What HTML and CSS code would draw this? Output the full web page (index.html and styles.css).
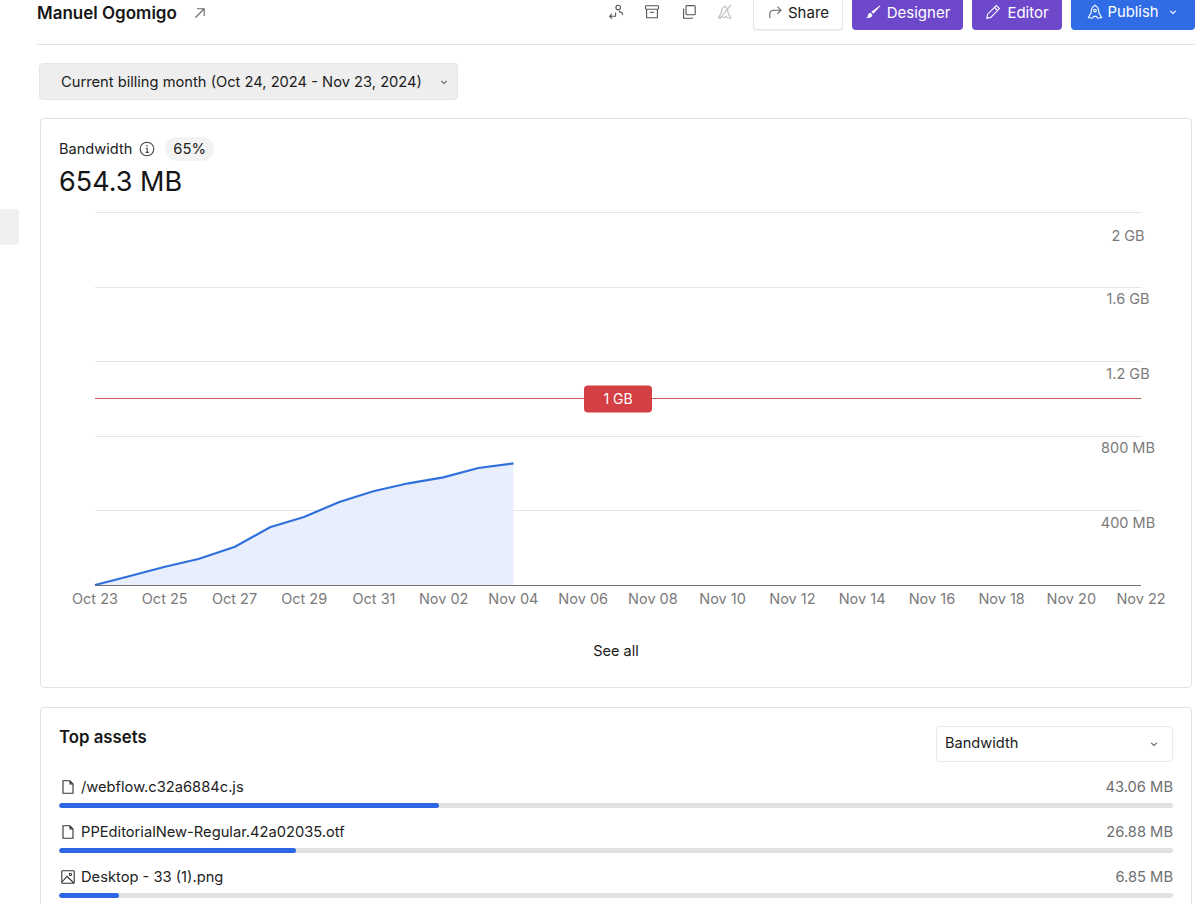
FILE: index.html
```html
<!DOCTYPE html>
<html lang="en">
<head>
<meta charset="utf-8">
<title>Usage</title>
<link rel="stylesheet" href="styles.css">
</head>
<body>
<div class="app">
  <aside class="rail"><div class="rail-tab"></div></aside>
  <main class="main">
    <header class="topbar">
      <div class="site">
        <span class="site-name">Manuel Ogomigo</span>
        <svg class="ic ic-link" viewBox="0 0 12 12"><path d="M1.500 10.500 10 2M3 1.800h7.200V9"/></svg>
      </div>
      <div class="actions">
        <div class="tools">
          <svg class="ic16" viewBox="0 0 16 16"><circle cx="10.200" cy="3.600" r="2.300"/><path d="M14.800 11c0-2.200-1.800-3.400-4-3.400M7.600 8.400v3.800H1.600M4 9.800 1.600 12.200 4 14.600"/></svg>
          <svg class="ic16" viewBox="0 0 16 16"><rect x="1.500" y="1.800" width="13" height="3.400" rx=".6"/><path d="M2.600 5.200v8.600h10.800V5.200M5.800 8.200h4.400"/></svg>
          <svg class="ic16" viewBox="0 0 16 16"><rect x="5" y="1.600" width="9.200" height="9.200" rx="1"/><path d="M2.600 4.600v9.600h9.400"/></svg>
          <svg class="ic16 faint" viewBox="0 0 16 16"><path d="M7.800 2.200c2.400 1.400 3.400 3.600 3.200 6.600l2.800 5.400-3.400-.4-1.300-1.400-2 1.200-2-1.200-1.700 1.400-1.800-.4 2.800-5c-.2-2.600.8-4.800 3.400-6.200zM2.400 15 14 .8"/></svg>
        </div>
        <button class="btn btn-share">
          <svg class="ic16" viewBox="0 0 16 16"><path d="M2.800 14V9.800c0-2.200 1.600-3.600 3.600-3.600H14M10.400 2.600 14 6.200 10.400 9.800"/></svg>
          Share
        </button>
        <button class="btn btn-purple btn-designer">
          <svg class="ic16 on-dark" viewBox="0 0 16 16"><path class="solid" d="M14.800 1.400 15.400 2 8.400 9.800 6.400 7.800zM5.400 8.800l2 2c-.2 2.600-2.800 3.600-6.400 3.200 1.600-.6 1.800-1.800 2-2.800.2-1.200 1.400-2.400 2.400-2.400z"/></svg>
          Designer
        </button>
        <button class="btn btn-purple btn-editor">
          <svg class="ic16 on-dark" viewBox="0 0 16 16"><path d="M11.400 1.600 14.400 4.600 5.800 13.400 1.800 14.200 2.600 10.200zM9.600 3.600l2.800 2.800"/></svg>
          Editor
        </button>
        <button class="btn btn-blue">
          <svg class="ic16 on-dark" viewBox="0 0 16 16"><path d="M8 1.200c2.800 1.500 4 4.100 3.800 7.400l2.800 5-4 .6-1.300-1.800H6.700l-1.300 1.800-4-.6 2.800-5C4 5.300 5.200 2.700 8 1.200z"/><circle cx="8" cy="6.600" r="1.300"/></svg>
          Publish
          <svg class="ic-chev on-dark" viewBox="0 0 10 10"><path d="M2.200 3.800 5 6.400 7.800 3.800"/></svg>
        </button>
      </div>
    </header>

    <div class="period">
      <span class="period-label">Current billing month (Oct 24, 2024 - Nov 23, 2024)</span>
      <svg class="ic-chev" viewBox="0 0 10 10"><path d="M2.200 3.800 5 6.400 7.800 3.800"/></svg>
    </div>

    <section class="card usage">
      <div class="metric-row">
        <span class="metric-label">Bandwidth</span>
        <svg class="ic-info" viewBox="0 0 16 16"><circle cx="8" cy="8" r="6.800"/><path d="M6.800 7.200H8.200V11.400M6.600 11.400H9.800"/><circle class="dot" cx="8" cy="4.800" r=".8"/></svg>
        <span class="pill">65%</span>
      </div>
      <div class="metric-value">654.3 MB</div>
      <svg class="chart" viewBox="41 205 1150 415">
        <g class="grid">
          <path d="M95 212.500H1141M95 287.500H1141M95 361.500H1141M95 436.500H1141M95 510.500H1141"/>
        </g>
        <g class="y-labels">
          <text x="1128" y="241">2 GB</text>
          <text x="1128" y="304">1.6 GB</text>
          <text x="1128" y="379">1.2 GB</text>
          <text x="1128" y="453">800 MB</text>
          <text x="1128" y="528">400 MB</text>
        </g>
        <path class="area" d="M95 585L130 576L165 566.700L198.300 559L235 546.700L270 527.300L304 517L339.300 502L373.300 491.300L408.300 483.300L443.300 477.300L478.300 468L513.500 463.300V585Z"/>
        <path class="line" d="M95 585L130 576L165 566.700L198.300 559L235 546.700L270 527.300L304 517L339.300 502L373.300 491.300L408.300 483.300L443.300 477.300L478.300 468L513.500 463.300"/>
        <path class="axis" d="M95 585.500H1141"/>
        <path class="limit" d="M95 398.500H1141"/>
        <rect class="limit-tag" x="584" y="385.500" width="68" height="27" rx="4"/>
        <text class="limit-text" x="618" y="404">1 GB</text>
        <g class="x-labels">
          <text x="95" y="604">Oct 23</text>
          <text x="164.700" y="604">Oct 25</text>
          <text x="234.500" y="604">Oct 27</text>
          <text x="304.200" y="604">Oct 29</text>
          <text x="374" y="604">Oct 31</text>
          <text x="443.700" y="604">Nov 02</text>
          <text x="513.400" y="604">Nov 04</text>
          <text x="583.200" y="604">Nov 06</text>
          <text x="652.900" y="604">Nov 08</text>
          <text x="722.600" y="604">Nov 10</text>
          <text x="792.400" y="604">Nov 12</text>
          <text x="862.100" y="604">Nov 14</text>
          <text x="931.900" y="604">Nov 16</text>
          <text x="1001.600" y="604">Nov 18</text>
          <text x="1071.300" y="604">Nov 20</text>
          <text x="1141" y="604">Nov 22</text>
        </g>
      </svg>
      <div class="see-all">See all</div>
    </section>

    <section class="card assets">
      <div class="assets-head">
        <h2 class="assets-title">Top assets</h2>
        <div class="metric-select">
          <span class="select-label">Bandwidth</span>
          <svg class="ic-chev" viewBox="0 0 10 10"><path d="M2.200 3.800 5 6.400 7.800 3.800"/></svg>
        </div>
      </div>
      <div class="asset">
        <div class="asset-row">
          <svg class="ic-file" viewBox="0 0 16 16"><path d="M3 1.800H10L13 5V14.200H3zM10 1.800V5H13"/></svg>
          <span class="asset-name">/webflow.c32a6884c.js</span>
          <span class="asset-size">43.06 MB</span>
        </div>
        <div class="bar"><div class="bar-fill" style="width:34.1%"></div></div>
      </div>
      <div class="asset">
        <div class="asset-row">
          <svg class="ic-file" viewBox="0 0 16 16"><path d="M3 1.800H10L13 5V14.200H3zM10 1.800V5H13"/></svg>
          <span class="asset-name">PPEditorialNew-Regular.42a02035.otf</span>
          <span class="asset-size">26.88 MB</span>
        </div>
        <div class="bar"><div class="bar-fill" style="width:21.3%"></div></div>
      </div>
      <div class="asset">
        <div class="asset-row">
          <svg class="ic-file" viewBox="0 0 16 16"><rect x="1.800" y="1.800" width="12.400" height="12.400" rx=".8"/><circle cx="10.400" cy="5.400" r="1.100"/><path d="M2 13 7 7.400 13.800 14"/></svg>
          <span class="asset-name">Desktop - 33 (1).png</span>
          <span class="asset-size">6.85 MB</span>
        </div>
        <div class="bar"><div class="bar-fill" style="width:5.4%"></div></div>
      </div>
    </section>
  </main>
</div>
</body>
</html>
```

FILE: styles.css
```css
* { box-sizing: border-box; }
html, body { margin: 0; height: 904px; overflow: hidden; background: #fff; }
body { font-family: Inter, "Liberation Sans", sans-serif; color: #1a1a1a; font-size: 15px; }

.app { display: flex; height: 904px; overflow: hidden; }
.rail { width: 37px; flex: none; padding-top: 209px; }
.rail-tab { width: 19px; height: 36px; background: #f0f0f0; border-radius: 0 4px 4px 0; }
.main { width: 1158px; flex: none; }

svg { fill: none; stroke: currentColor; stroke-width: 1.1; }
.ic16 { width: 16px; height: 16px; flex: none; }
.ic-link { width: 12px; height: 12px; color: #666; }
.ic-chev { width: 10px; height: 10px; flex: none; color: #666; }
.on-dark { color: #fff; }
.faint { color: #bdbdbd; }
.solid { fill: #fff; stroke: none; }

.topbar { height: 45px; padding-bottom: 14px; border-bottom: 1px solid #e4e4e4; display: flex; justify-content: space-between; }
.site { display: flex; align-items: center; gap: 17px; height: 26px; }
.site-name { font-size: 17px; font-weight: 600; color: #161616; }
.actions { display: flex; gap: 9px; height: 30px; }
.tools { display: flex; align-items: center; gap: 20.5px; color: #555; margin-right: 11px; height: 24px; }
.btn { height: 36px; margin-top: -6px; border-radius: 4px; border: 0; font: inherit; font-size: 15px; display: flex; align-items: center; justify-content: center; gap: 6px; color: #fff; }
.btn-share { width: 90px; gap: 5px; background: #fff; color: #1a1a1a; border: 1px solid #e6e6e6; box-shadow: 0 1px 1px #eee; }
.btn-share svg { color: #666; }
.btn-purple { background: #6e48cb; }
.btn-designer { width: 111px; }
.btn-editor { width: 90px; padding-left: 6px; }
.btn-blue { width: 124px; padding-right: 8px; gap: 5px; font-size: 14.8px; background: #2f6ce5; }
.btn-blue .ic-chev { margin-left: 4px; }

.period { width: 419px; height: 37px; margin: 18px 0 18px 2px; padding: 0 8px 0 21px; background: #eeeeee; border: 1px solid #e5e5e5; border-radius: 4px; display: flex; align-items: center; justify-content: space-between; font-size: 14.7px; color: #1c1c1c; }

.card { width: 1152px; margin-left: 3px; background: #fff; border: 1px solid #e2e2e2; border-radius: 4px; }
.usage { height: 570px; padding: 18px; margin-bottom: 19px; }
.metric-row { display: flex; align-items: center; height: 24px; font-size: 14.6px; color: #222; }
.ic-info { width: 16px; height: 16px; margin-left: 7px; color: #444; }
.ic-info .dot { fill: #444; stroke: none; }
.pill { margin-left: 10px; padding: 0 8px; height: 24px; line-height: 24px; font-size: 14.8px; background: #f3f3f3; border-radius: 12px; }
.metric-value { font-size: 27px; line-height: 38px; margin-top: 2px; color: #141414; }
.chart { display: block; width: 1150px; height: 415px; margin: 4px 0 0 -18px; stroke: none; }
.chart text { font-family: Inter, "Liberation Sans", sans-serif; font-size: 14.5px; fill: #7a7a7a; stroke: none; text-anchor: middle; }
.grid path { stroke: #e5e5e5; stroke-width: 1; }
.area { fill: #e8eefb; stroke: none; }
.line { stroke: #2f70dd; stroke-width: 2.2; }
.axis { stroke: #707070; stroke-width: 1; }
.limit { stroke: #cf5a5e; stroke-width: 1; }
.limit-tag { fill: #d33f42; stroke: none; }
.chart .limit-text { fill: #fff; font-size: 14px; }
.see-all { margin-top: 21px; text-align: center; line-height: 20px; font-size: 14.5px; color: #1a1a1a; }

.assets { height: 260px; padding: 18px; }
.assets-head { display: flex; justify-content: space-between; height: 53px; }
.assets-title { margin: 0; font-size: 16.8px; font-weight: 600; line-height: 22px; color: #161616; }
.metric-select { width: 237px; height: 36px; padding: 0 13px 0 8px; border: 1px solid #e9e9e9; border-radius: 4px; display: flex; align-items: center; justify-content: space-between; font-size: 14.6px; }
.select-label { padding-bottom: 2px; }
.asset { height: 45px; }
.asset-row { display: flex; align-items: center; height: 16px; gap: 5px; padding-left: 1px; margin-bottom: 8px; }
.ic-file { width: 16px; height: 16px; flex: none; color: #333; }
.asset-name { flex: 1; font-size: 14.7px; color: #222; }
.asset-size { font-size: 14.7px; color: #6f6f6f; }
.bar { height: 5px; background: #e2e2e2; border-radius: 3px; overflow: hidden; }
.bar-fill { height: 100%; background: #2e66e6; border-radius: 3px; }
```
